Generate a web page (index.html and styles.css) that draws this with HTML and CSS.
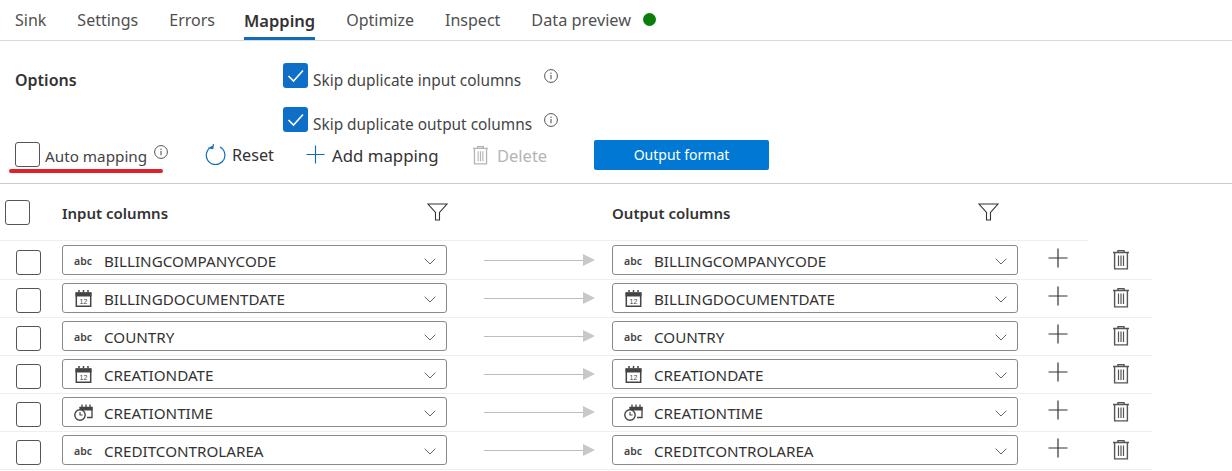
FILE: index.html
```html
<!DOCTYPE html>
<html lang="en">
<head>
    <meta charset="UTF-8">
    <meta name="viewport" content="width=device-width, initial-scale=1.0">
    <title>Sink mapping</title>
    <link rel="stylesheet" href="styles.css">
</head>
<body>
    <svg class="defs" width="0" height="0" aria-hidden="true">
        <symbol id="i-info" viewBox="0 0 14 14">
            <circle cx="7" cy="7" r="6.4" fill="none" stroke="#555" stroke-width="1"/>
            <path d="M7 6v4.2" stroke="#555" stroke-width="1.1"/>
            <circle cx="7" cy="4.2" r=".7" fill="#555"/>
        </symbol>
        <symbol id="i-check" viewBox="0 0 25 25">
            <path d="M5.5 13l5 5L20 7.5" fill="none" stroke="#fff" stroke-width="1.6"/>
        </symbol>
        <symbol id="i-plus" viewBox="0 0 20 20">
            <path d="M10 .5v19M.5 10h19" fill="none" stroke="currentColor" stroke-width="1.2"/>
        </symbol>
        <symbol id="i-trash" viewBox="0 0 18 21">
            <path d="M1 3.5h16M6 3.5V1.6h6v1.9M2.6 3.5v16.4h12.8V3.5" fill="none" stroke="currentColor" stroke-width="1.4"/>
            <path d="M6.5 6.5v10.500M9 6.5v10.500M11.500 6.5v10.500" fill="none" stroke="currentColor" stroke-width="1.2"/>
        </symbol>
        <symbol id="i-filter" viewBox="0 0 21 18">
            <path d="M1 1h19l-7.500 8.500V17h-4V9.500z" fill="none" stroke="#333" stroke-width="1.1"/>
        </symbol>
        <symbol id="i-date" viewBox="0 0 16 17">
            <path d="M.8 3h14.400v13.200H.8z" fill="#fff" stroke="#444" stroke-width="1.500"/>
            <path d="M0 2.500h16v4H0z" fill="#444"/>
            <path d="M3.500 0v2M8 0v2M12.500 0v2" stroke="#444" stroke-width="1.500"/>
            <text x="8" y="14.300" class="cal-num">12</text>
        </symbol>
        <symbol id="i-time" viewBox="0 0 19 17">
            <path d="M5.500 3.500h12.500v10h-5" fill="none" stroke="#444" stroke-width="1.300"/>
            <path d="M5.500 3h13v3.500h-13z" fill="#444"/>
            <path d="M8 .5v2.500M12 .5v2.500M16 .5v2.500" stroke="#444" stroke-width="1.300"/>
            <circle cx="6" cy="11" r="5.200" fill="#fff" stroke="#444" stroke-width="1.400"/>
            <path d="M6 8v3h2.600" fill="none" stroke="#444" stroke-width="1.100"/>
        </symbol>
        <symbol id="i-chevron" viewBox="0 0 12 7">
            <path d="M.7.700L6 6l5.300-5.300" fill="none" stroke="#666" stroke-width="1"/>
        </symbol>
    </svg>

    <div class="tabs">
        <span class="tab">Sink</span>
        <span class="tab">Settings</span>
        <span class="tab">Errors</span>
        <span class="tab active">Mapping</span>
        <span class="tab">Optimize</span>
        <span class="tab">Inspect</span>
        <span class="tab">Data preview</span>
        <span class="status-dot"></span>
    </div>

    <div class="options">
        <div class="options-top">
            <div class="options-title">Options</div>
            <div class="skip-list">
                <div class="skip">
                    <span class="box checked"><svg width="25" height="25"><use href="#i-check"/></svg></span>
                    <span class="skip-text">Skip duplicate input columns</span>
                    <svg class="info" width="14" height="14"><use href="#i-info"/></svg>
                </div>
                <div class="skip">
                    <span class="box checked"><svg width="25" height="25"><use href="#i-check"/></svg></span>
                    <span class="skip-text">Skip duplicate output columns</span>
                    <svg class="info" width="14" height="14"><use href="#i-info"/></svg>
                </div>
            </div>
        </div>
        <div class="toolbar">
            <div class="auto-map">
                <span class="box"></span>
                <span class="auto-text">Auto mapping</span>
                <svg class="info" width="14" height="14"><use href="#i-info"/></svg>
            </div>
            <div class="tool reset">
                <svg width="21" height="21" viewBox="0 0 21 21"><path d="M7.500 2.500a9.300 9.300 0 1 0 6.400 0M7 .5v4.500H2.500" transform="rotate(8 10.500 10.500)" fill="none" stroke="#0f6cbd" stroke-width="1.200"/></svg>
                <span>Reset</span>
            </div>
            <div class="tool add">
                <svg class="blue" width="19" height="19"><use href="#i-plus"/></svg>
                <span>Add mapping</span>
            </div>
            <div class="tool delete">
                <svg width="17" height="20"><use href="#i-trash"/></svg>
                <span>Delete</span>
            </div>
            <button class="primary">Output format</button>
        </div>
    </div>

    <div class="map-head">
        <span class="box"></span>
        <div class="head-col in">
            <span>Input columns</span>
            <svg width="21" height="18"><use href="#i-filter"/></svg>
        </div>
        <div class="head-col out">
            <span>Output columns</span>
            <svg width="21" height="18"><use href="#i-filter"/></svg>
        </div>
    </div>

    <div class="rows" id="rows"></div>

    <script>
        const columns = [
            ["abc", "BILLINGCOMPANYCODE"],
            ["date", "BILLINGDOCUMENTDATE"],
            ["abc", "COUNTRY"],
            ["date", "CREATIONDATE"],
            ["time", "CREATIONTIME"],
            ["abc", "CREDITCONTROLAREA"]
        ];

        function typeIcon(type) {
            if (type === "abc") return '<span class="abc">abc</span>';
            return `<svg class="type-icon" width="19" height="17"><use href="#i-${type}"/></svg>`;
        }

        function selectBox(type, name, cls) {
            return `<div class="select ${cls}">
                <span class="type">${typeIcon(type)}</span>
                <span class="select-name">${name}</span>
                <svg class="chevron" width="12" height="7"><use href="#i-chevron"/></svg>
            </div>`;
        }

        document.getElementById("rows").innerHTML = columns.map(([type, name]) => `
            <div class="row">
                <span class="box"></span>
                ${selectBox(type, name, "in")}
                <div class="arrow"><span class="arrow-line"></span><span class="arrow-head"></span></div>
                ${selectBox(type, name, "out")}
                <svg class="row-plus" width="20" height="20"><use href="#i-plus"/></svg>
                <svg class="row-trash" width="18" height="21"><use href="#i-trash"/></svg>
            </div>`).join("");
    </script>
</body>
</html>
```

FILE: styles.css
```css
body {
    margin: 0;
    font-family: "Noto Sans", "Open Sans", Arial, sans-serif;
    color: #333;
    background-color: #fff;
    overflow: hidden;
}

.defs {
    display: none;
}

.cal-num {
    font-size: 7px;
    font-family: "Liberation Sans", sans-serif;
    text-anchor: middle;
    fill: #444;
}

.tabs {
    display: flex;
    align-items: center;
    gap: 31px;
    height: 40px;
    padding-left: 15px;
    border-bottom: 1px solid #d9d9d9;
}

.tab {
    display: flex;
    align-items: center;
    height: 40px;
    box-sizing: border-box;
    font-size: 16px;
    color: #505050;
}

.tab:nth-child(7) {
    font-size: 16.300px;
}

.tab.active {
    margin-left: -2px;
    color: #333;
    font-size: 16.500px;
    font-weight: 600;
    border-bottom: 3px solid #0f6cbd;
    padding-top: 3px;
}

.status-dot {
    width: 13px;
    height: 13px;
    margin: -2px 0 0 -19px;
    border-radius: 50%;
    background-color: #0b7d0b;
}

.options {
    height: 142px;
    border-bottom: 1px solid #ccc;
}

.options-top {
    display: flex;
    padding: 22px 0 0 15px;
}

.options-title {
    width: 268px;
    padding-top: 6px;
    font-size: 16px;
    font-weight: 600;
}

.skip-list {
    display: flex;
    flex-direction: column;
    gap: 19px;
}

.skip {
    display: flex;
    height: 25px;
}

.skip-text {
    margin-left: 5px;
    padding-top: 6px;
    font-size: 15.400px;
    line-height: 24px;
    color: #444;
}

.skip .info {
    margin: 6px 0 0 12px;
}

.skip:first-child .info {
    margin-left: 23px;
}

.box {
    display: block;
    flex: none;
    width: 25px;
    height: 25px;
    box-sizing: border-box;
    border: 1px solid #555;
    border-radius: 3px;
    background-color: #fff;
}

.box.checked {
    border: none;
    background-color: #0e6fc9;
}

.box svg {
    display: block;
}

.toolbar {
    display: flex;
    align-items: center;
    height: 31px;
    margin-top: 7px;
    padding-left: 15px;
}

.auto-map {
    position: relative;
    display: flex;
    align-items: center;
    width: 190px;
}

.auto-map::after {
    content: "";
    position: absolute;
    left: -6px;
    top: 27px;
    width: 154px;
    height: 4px;
    border-radius: 2px;
    background-color: #e0202a;
}

.auto-text {
    margin: 3px 0 0 5px;
    font-size: 15.250px;
    color: #444;
}

.auto-map .info {
    margin: -6px 0 0 7px;
}

.tool {
    display: flex;
    align-items: center;
    font-size: 16.500px;
    color: #333;
}

.tool span {
    padding-top: 1px;
}

.reset {
    width: 101px;
    gap: 6px;
    font-size: 16.200px;
}

.add {
    width: 166px;
    gap: 7px;
    font-size: 16.800px;
}

.delete {
    width: 122px;
    gap: 8px;
    color: #b5b5b5;
}

.blue {
    color: #0f6cbd;
}

.primary {
    width: 175px;
    height: 30px;
    border: none;
    border-radius: 2px;
    color: #fff;
    font-family: inherit;
    font-size: 14px;
    background-color: #0078d4;
}

.map-head {
    display: flex;
    align-items: center;
    height: 56px;
    padding-left: 5px;
}

.head-col {
    display: flex;
    align-items: center;
    justify-content: space-between;
    font-size: 15px;
    font-weight: 600;
}

.head-col span {
    padding-top: 2px;
}

.head-col.in {
    width: 386px;
    margin-left: 32px;
}

.head-col.out {
    width: 387px;
    margin-left: 164px;
}

.rows {
    width: 1152px;
    padding-top: 2px;
    background: linear-gradient(#eee, #eee) no-repeat 0 0 / 1088px 1px;
}

.row {
    display: flex;
    align-items: center;
    height: 38px;
    box-sizing: border-box;
    padding: 0 0 1px 16px;
    border-bottom: 1px solid #eee;
}

.row > .box {
    margin-top: 4px;
}

.select {
    display: flex;
    align-items: center;
    height: 30px;
    box-sizing: border-box;
    margin-left: 21px;
    padding: 0 10px 0 11px;
    border: 1px solid #8a8a8a;
    border-radius: 3px;
    font-size: 15.200px;
    color: #333;
}

.select.in {
    width: 385px;
}

.select.out {
    width: 406px;
    margin-left: 17px;
}

.type {
    display: flex;
    align-items: center;
    width: 30px;
    padding-top: 1px;
    flex: none;
}

.abc {
    padding-top: 1px;
    font-size: 10.500px;
    font-weight: 600;
    color: #444;
}

.select-name {
    flex: 1;
    padding-top: 1px;
}

.chevron {
    margin-top: 2px;
}

.arrow {
    display: flex;
    align-items: center;
    width: 111px;
    margin: 0 0 0 37px;
}

.arrow-line {
    flex: 1;
    height: 1px;
    background-color: #bdbdbd;
}

.arrow-head {
    border-left: 12px solid #c8c8c8;
    border-top: 6px solid transparent;
    border-bottom: 6px solid transparent;
}

.row-plus {
    margin: -4px 0 0 30px;
    color: #333;
}

.row-trash {
    margin: -2px 0 0 44px;
    color: #555;
}
```
